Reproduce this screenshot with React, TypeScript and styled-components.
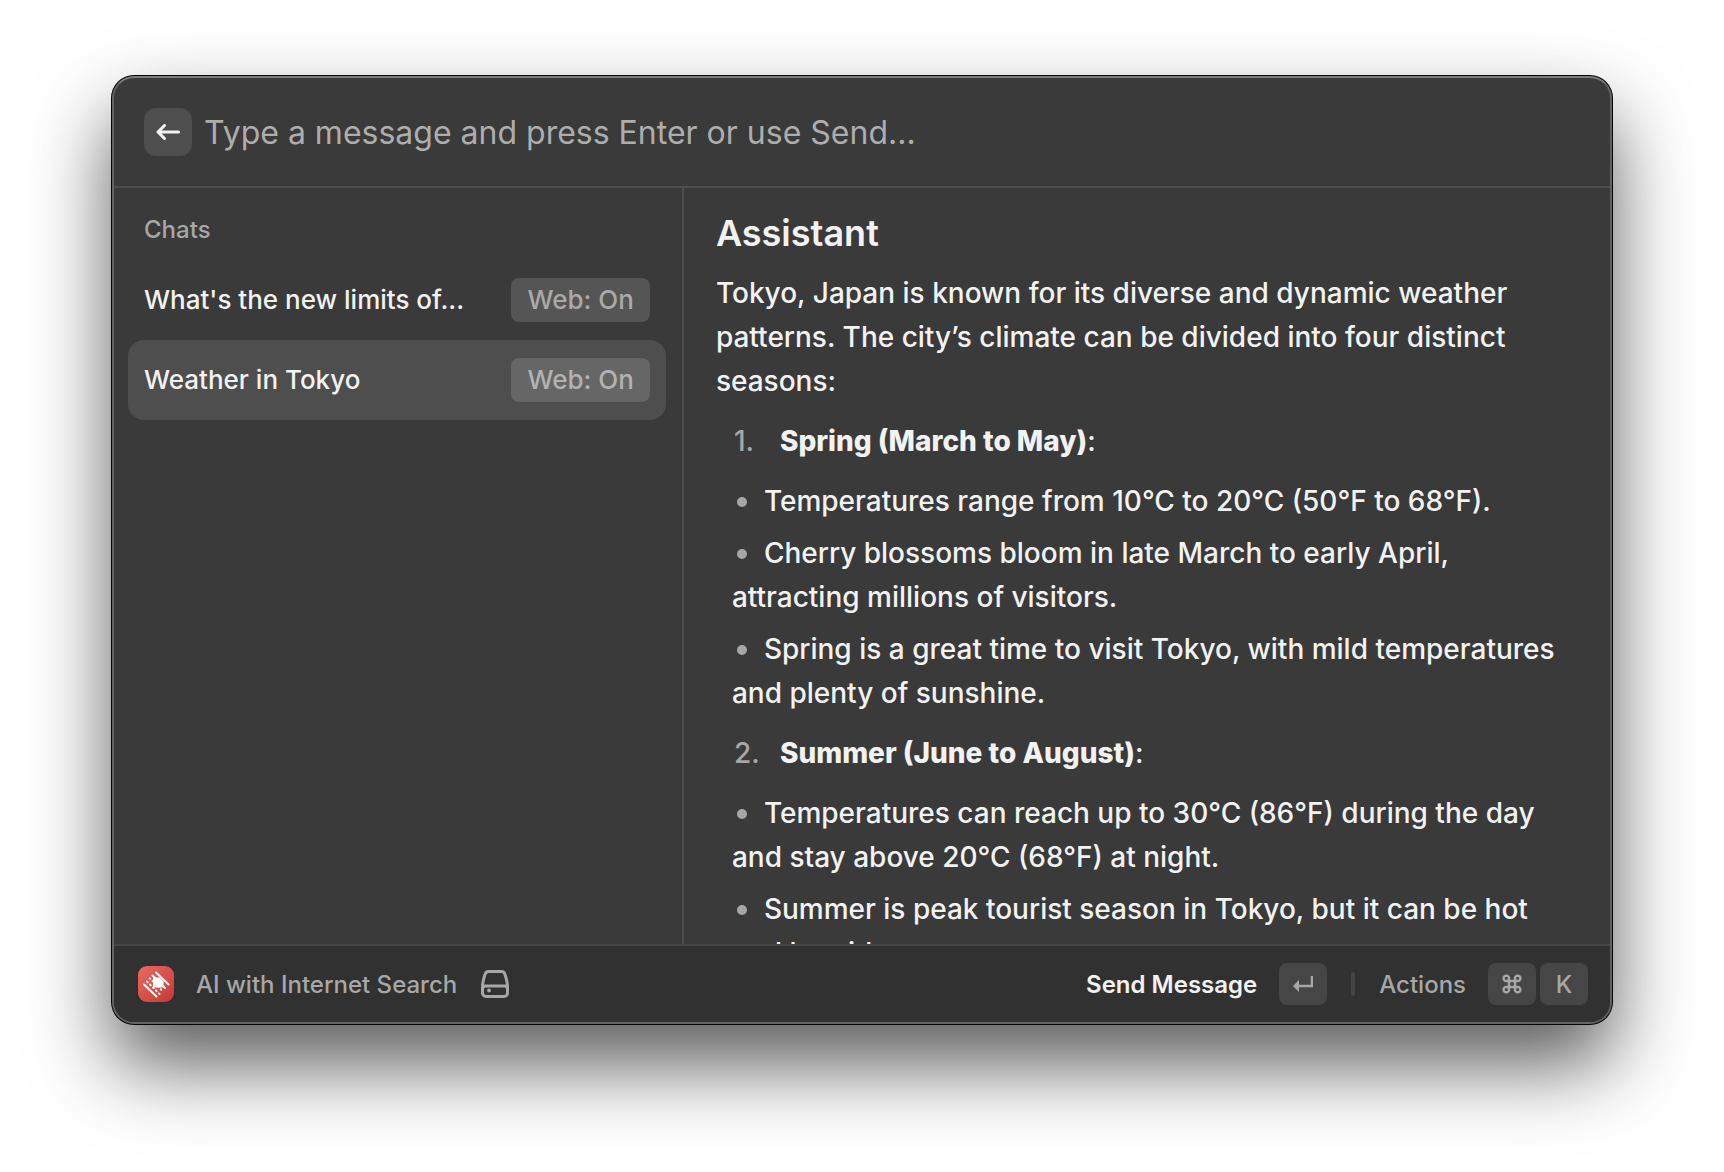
import React from "react";
import styled, { createGlobalStyle } from "styled-components";

const GlobalStyle = createGlobalStyle`
  *, *::before, *::after { box-sizing: border-box; }
  body {
    margin: 0;
    background: #ffffff;
    font-family: Inter, "Liberation Sans", sans-serif;
    font-weight: 500;
    color: #f2f2f2;
  }
  button, input { font: inherit; color: inherit; }
`;

const Desktop = styled.div`
  height: 100vh;
  min-height: 640px;
  padding: 76px 112px 148px;
`;

const Window = styled.main`
  display: flex;
  flex-direction: column;
  height: 100%;
  overflow: hidden;
  border: 2px solid #636363;
  border-top-color: #7c7c7c;
  border-radius: 22px;
  background: #3a3a3a;
  box-shadow: 0 0 0 1px #050505, 0 40px 80px rgba(0, 0, 0, 0.65);
`;

const Header = styled.header`
  display: flex;
  align-items: center;
  gap: 12px;
  height: 110px;
  flex: none;
  padding: 0 30px;
  border-bottom: 2px solid #4d4d4d;
`;

const BackButton = styled.button`
  display: grid;
  place-items: center;
  flex: none;
  width: 48px;
  height: 48px;
  padding: 0;
  border: 0;
  border-radius: 12px;
  background: #4e4e4e;
`;

const MessageInput = styled.input`
  flex: 1;
  min-width: 0;
  height: 48px;
  padding: 0;
  border: 0;
  outline: 0;
  background: transparent;
  font-size: 32px;
  font-weight: 400;
  &::placeholder { color: #adadad; opacity: 1; }
`;

const Body = styled.div`
  display: grid;
  grid-template-columns: 8fr 13fr;
  grid-template-rows: minmax(0, 1fr);
  flex: 1;
  min-height: 0;
`;

const Sidebar = styled.nav`
  min-width: 0;
  padding: 24px 16px 0 14px;
  border-right: 2px solid #4d4d4d;
`;

const SidebarTitle = styled.h2`
  margin: 0 0 12px;
  padding: 0 16px;
  font-size: 24px;
  line-height: 36px;
  font-weight: 500;
  color: #a7a7a7;
`;

const ChatList = styled.ul`
  margin: 0;
  padding: 0;
  list-style: none;
`;

const ChatButton = styled.button<{ $selected: boolean }>`
  display: flex;
  align-items: center;
  justify-content: space-between;
  gap: 24px;
  width: 100%;
  height: 80px;
  padding: 0 16px;
  border: 0;
  border-radius: 16px;
  text-align: left;
  background: ${(p) => (p.$selected ? "#4e4e4e" : "transparent")};
`;

const ChatName = styled.span`
  font-size: 26px;
  line-height: 36px;
  white-space: nowrap;
`;

const Tag = styled.span<{ $selected: boolean }>`
  flex: none;
  padding: 0 16px;
  border-radius: 8px;
  font-size: 26px;
  line-height: 44px;
  color: ${(p) => (p.$selected ? "#b2b2b2" : "#a9a9a9")};
  background: ${(p) => (p.$selected ? "#666666" : "#555555")};
`;

const Answer = styled.article`
  min-width: 0;
  overflow: hidden;
  padding: 23px 32px 0;
  font-size: 28px;
  line-height: 44px;
`;

const AnswerTitle = styled.h1`
  margin: 0 0 16px;
  font-size: 36px;
  line-height: 44px;
  font-weight: 600;
`;

const Paragraph = styled.p`
  margin: 0 0 16px;
`;

const Seasons = styled.ol`
  margin: 0;
  padding: 0 0 0 16px;
  list-style: none;
`;

const SeasonTitle = styled.div`
  display: flex;
  margin-bottom: 16px;
`;

const SeasonNumber = styled.span`
  width: 48px;
  padding-left: 2px;
  color: #a7a7a7;
`;

const SeasonName = styled.strong`
  font-weight: 800;
`;

const Facts = styled.ul`
  margin: 0 0 16px;
  padding: 0;
  list-style: none;
`;

const Fact = styled.li`
  & + & { margin-top: 8px; }
  &::before {
    content: "";
    display: inline-block;
    width: 10px;
    height: 10px;
    margin: 0 17px 4px 5px;
    border-radius: 50%;
    background: #a7a7a7;
  }
`;

const Footer = styled.footer`
  display: flex;
  align-items: center;
  flex: none;
  height: 78px;
  padding: 0 22px 0 24px;
  border-top: 2px solid #454545;
  background: #313131;
  font-size: 24px;
  color: #a7a7a7;
`;

const AppName = styled.span`
  margin: 0 24px 0 22px;
`;

const Spacer = styled.div`
  flex: 1;
`;

const ActionButton = styled.button<{ $primary?: boolean }>`
  display: flex;
  align-items: center;
  gap: 4px;
  padding: 0;
  border: 0;
  background: none;
  font-weight: ${(p) => (p.$primary ? 600 : 500)};
  color: ${(p) => (p.$primary ? "#f2f2f2" : "#a7a7a7")};
`;

const ActionLabel = styled.span`
  margin-right: 18px;
`;

const Key = styled.kbd`
  display: grid;
  place-items: center;
  width: 48px;
  height: 42px;
  border-radius: 8px;
  font: inherit;
  font-weight: 500;
  color: #a7a7a7;
  background: #464646;
`;

const Divider = styled.span`
  width: 4px;
  height: 24px;
  margin: 0 24px;
  border-radius: 2px;
  background: #454545;
`;

const chats = [
  { name: "What's the new limits of...", selected: false },
  { name: "Weather in Tokyo", selected: true },
];

const seasons = [
  {
    title: "Spring (March to May)",
    facts: [
      "Temperatures range from 10°C to 20°C (50°F to 68°F).",
      "Cherry blossoms bloom in late March to early April, attracting millions of visitors.",
      "Spring is a great time to visit Tokyo, with mild temperatures and plenty of sunshine.",
    ],
  },
  {
    title: "Summer (June to August)",
    facts: [
      "Temperatures can reach up to 30°C (86°F) during the day and stay above 20°C (68°F) at night.",
      "Summer is peak tourist season in Tokyo, but it can be hot and humid.",
    ],
  },
];

const ArrowIcon = () => (
  <svg width="24" height="16" viewBox="0 0 24 16" fill="none" stroke="#f2f2f2" strokeWidth="3" strokeLinecap="round" strokeLinejoin="round" aria-hidden="true">
    <path d="M22.5 8H2M8.500 1.500L2 8l6.500 6.500" />
  </svg>
);

const AppLogo = () => (
  <svg width="36" height="36" viewBox="0 0 36 36" aria-hidden="true">
    <defs>
      <linearGradient id="logo" x1="0" y1="0" x2="1" y2="1">
        <stop offset="0" stopColor="#ec6a62" />
        <stop offset="1" stopColor="#c23a34" />
      </linearGradient>
    </defs>
    <rect width="36" height="36" rx="9" fill="url(#logo)" />
    <g stroke="#fff" strokeWidth="2" strokeLinecap="round">
      <path d="M18 6.500L30.500 18.500M6 18.500L18.500 30.500M14.500 9.500L27 22" />
      <path d="M11.800 12.300L24.500 25" strokeDasharray="0.500 3.400" />
      <path d="M9 15.500L21.500 28" strokeDasharray="1 3.200" />
    </g>
    <path d="M15 11.500h6.500l4 4v6H15z" fill="#fff" />
  </svg>
);

const DriveIcon = () => (
  <svg width="28" height="28" viewBox="0 0 28 28" fill="none" stroke="#a7a7a7" strokeWidth="3" strokeLinejoin="round" aria-hidden="true">
    <path d="M7.500 1.500h13a3.500 3.500 0 0 1 3.400 2.700Q26.500 12 26.500 17v6a3.500 3.500 0 0 1-3.500 3.500H5A3.500 3.500 0 0 1 1.500 23v-6q0-5 2.600-12.800A3.500 3.500 0 0 1 7.500 1.500zM1.500 19a3 3 0 0 1 3-3h19a3 3 0 0 1 3 3" />
    <circle cx="8" cy="20.500" r="1.900" fill="#a7a7a7" stroke="none" />
  </svg>
);

const ReturnIcon = () => (
  <svg width="20" height="18" viewBox="0 0 20 18" fill="none" aria-hidden="true">
    <path d="M19 1v10H4" stroke="#a7a7a7" strokeWidth="2.500" />
    <path d="M0 11l6-6v12z" fill="#a7a7a7" />
  </svg>
);

const CommandIcon = () => (
  <svg width="20" height="20" viewBox="0 0 20 20" fill="none" stroke="#a7a7a7" strokeWidth="2.400" aria-hidden="true">
    <path d="M7 7h6v6H7zM7 7H4.500A2.700 2.700 0 1 1 7 4.500zM13 7V4.500A2.700 2.700 0 1 1 15.500 7zM13 13h2.500A2.700 2.700 0 1 1 13 15.500zM7 13v2.500A2.700 2.700 0 1 1 4.500 13z" />
  </svg>
);

export default function App() {
  return (
    <Desktop>
      <GlobalStyle />
      <Window>
        <Header>
          <BackButton aria-label="Back"><ArrowIcon /></BackButton>
          <MessageInput aria-label="Message" placeholder="Type a message and press Enter or use Send..." />
        </Header>
        <Body>
          <Sidebar>
            <SidebarTitle>Chats</SidebarTitle>
            <ChatList>
              {chats.map((chat) => (
                <li key={chat.name}>
                  <ChatButton $selected={chat.selected}>
                    <ChatName>{chat.name}</ChatName>
                    <Tag $selected={chat.selected}>Web: On</Tag>
                  </ChatButton>
                </li>
              ))}
            </ChatList>
          </Sidebar>
          <Answer>
            <AnswerTitle>Assistant</AnswerTitle>
            <Paragraph>
              Tokyo, Japan is known for its diverse and dynamic weather patterns. The city’s climate can be divided into four distinct seasons:
            </Paragraph>
            <Seasons>
              {seasons.map((season, i) => (
                <li key={season.title}>
                  <SeasonTitle>
                    <SeasonNumber>{i + 1}.</SeasonNumber>
                    <span><SeasonName>{season.title}</SeasonName>:</span>
                  </SeasonTitle>
                  <Facts>
                    {season.facts.map((fact) => <Fact key={fact}>{fact}</Fact>)}
                  </Facts>
                </li>
              ))}
            </Seasons>
          </Answer>
        </Body>
        <Footer>
          <AppLogo />
          <AppName>AI with Internet Search</AppName>
          <DriveIcon />
          <Spacer />
          <ActionButton $primary>
            <ActionLabel>Send Message</ActionLabel>
            <Key><ReturnIcon /></Key>
          </ActionButton>
          <Divider />
          <ActionButton>
            <ActionLabel>Actions</ActionLabel>
            <Key><CommandIcon /></Key>
            <Key>K</Key>
          </ActionButton>
        </Footer>
      </Window>
    </Desktop>
  );
}
